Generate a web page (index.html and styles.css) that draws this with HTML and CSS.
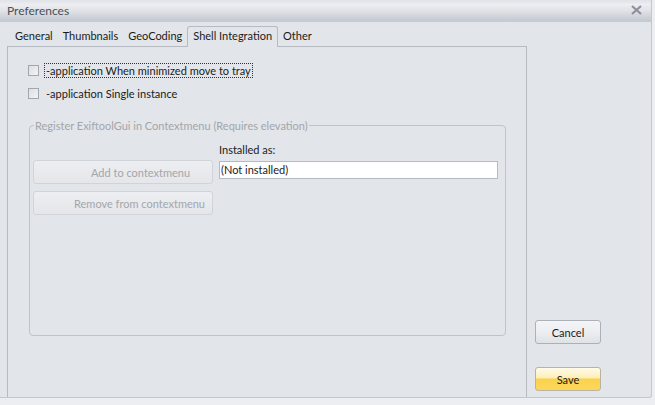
FILE: index.html
```html
<!DOCTYPE html>
<html>
<head>
<meta charset="utf-8">
<link rel="stylesheet" href="styles.css">
</head>
<body>
<div class="window">
  <div class="titlebar">
    <span class="title">Preferences</span>
    <svg class="close" width="11" height="10" viewBox="0 0 11 10"><path d="M1 1 L10 9 M10 1 L1 9" stroke="#8b909a" stroke-width="2.2" fill="none"/></svg>
  </div>
  <div class="main">
    <div class="left">
      <div class="tabs">
        <span class="tab">General</span>
        <span class="tab">Thumbnails</span>
        <span class="tab">GeoCoding</span>
        <span class="tab active">Shell Integration</span>
        <span class="tab">Other</span>
      </div>
      <div class="panel">
        <label class="check first"><span class="box"></span><span class="lbl focus">-application When minimized move to tray</span></label>
        <label class="check"><span class="box"></span><span class="lbl">-application Single instance</span></label>
        <fieldset class="group">
          <legend>Register ExiftoolGui in Contextmenu (Requires elevation)</legend>
          <div class="group-row">
            <div class="btncol">
              <button class="dbtn add">Add to contextmenu</button>
              <button class="dbtn rem">Remove from contextmenu</button>
            </div>
            <div class="inst">
              <div class="inst-lbl">Installed as:</div>
              <div class="input">(Not installed)</div>
            </div>
          </div>
        </fieldset>
      </div>
    </div>
    <div class="right">
      <button class="btn cancel">Cancel</button>
      <button class="btn save">Save</button>
    </div>
  </div>
</div>
</body>
</html>
```
FILE: styles.css
```css
html, body {
  margin: 0;
  padding: 0;
  background: #eceef1;
}
body {
  font-family: Lato, "Open Sans", sans-serif;
  font-size: 11px;
  color: #1b1b1b;
}
.window {
  width: 652px;
  height: 398px;
  background: #e2e5e9;
  border-right: 1px solid #c3c7ce;
  border-bottom: 1px solid #c3c7ce;
  border-bottom-right-radius: 3px;
  box-sizing: border-box;
  display: flex;
  flex-direction: column;
}
.titlebar {
  height: 22px;
  flex: none;
  display: flex;
  align-items: center;
  justify-content: space-between;
  padding: 0 9px 0 7px;
  background: linear-gradient(#dfe2e6 0%, #eceef1 20%, #dfe2e7 50%, #c9ced5 85%, #c5cad2 100%);
}
.title {
  color: #4a4f58;
  font-size: 12px;
  margin-top: -1px;
}
.close { margin-top: -3px; }
.main {
  flex: 1;
  display: flex;
  padding: 5px 0 0 7px;
  min-height: 0;
}
.left {
  width: 520px;
  display: flex;
  flex-direction: column;
}
.tabs {
  display: flex;
  height: 19px;
  padding-left: 3px;
  align-items: flex-end;
  position: relative;
  z-index: 1;
}
.tab {
  padding: 0 5px 3px;
  line-height: 15px;
  white-space: nowrap;
}
.tab.active {
  background: #e2e5e9;
  border: 1px solid #b5bac3;
  border-bottom: none;
  border-radius: 3px 3px 0 0;
  padding: 1px 5px 4px;
  margin-bottom: -1px;
}
.panel {
  flex: 1;
  border: 1px solid #b5bac3;
  border-bottom: none;
  padding: 15px 20px 0 20px;
  display: flex;
  flex-direction: column;
}
.check {
  display: flex;
  align-items: center;
  height: 16px;
  white-space: nowrap;
}
.check + .check { margin-top: 7px; }
.box {
  width: 9px;
  height: 9px;
  border: 1px solid #a2a6ad;
  background: linear-gradient(135deg, #dcdee1, #f3f4f5);
  margin-right: 5px;
}
.lbl { padding: 0 1px; border: 1px solid transparent; line-height: 13px; }
.lbl.focus { border: 1px dotted #333; }
.group {
  margin: 18px 1px 0 1px;
  width: 477px;
  height: 217px;
  box-sizing: border-box;
  border: 1px solid #bfc3ca;
  border-radius: 4px;
  padding: 0 7px 0 3px;
}
.group legend {
  color: #a3a6ab;
  padding: 0 1px;
  margin-left: 1px;
  white-space: nowrap;
}
.group-row {
  display: flex;
  gap: 6px;
}
.btncol {
  display: flex;
  flex-direction: column;
  gap: 7px;
  padding-top: 28px;
}
.dbtn {
  width: 180px;
  height: 24px;
  font: inherit;
  color: #a4a6aa;
  border: 1px solid #d0d4d9;
  border-radius: 3px;
  background: linear-gradient(#eceef1, #e4e6ea);
  padding: 0 0 0 57px;
  text-align: left;
  white-space: nowrap;
}
.dbtn.rem { padding-left: 40px; }
.inst { flex: 1; }
.inst-lbl { line-height: 16px; margin-top: 10px; }
.input {
  margin-top: 3px;
  height: 18px;
  box-sizing: border-box;
  background: #fff;
  border: 1px solid #b6bbc3;
  line-height: 16px;
  padding-left: 1px;
}
.right {
  display: flex;
  flex-direction: column;
  padding: 293px 0 0 8px;
  gap: 23px;
}
.btn {
  width: 66px;
  height: 24px;
  font: inherit;
  color: #1b1b1b;
  border-radius: 3px;
  padding: 0;
}
.cancel {
  border: 1px solid #acb1b9;
  background: linear-gradient(#f4f5f7 0%, #eceef1 50%, #dfe2e6 100%);
}
.save {
  border: 1px solid #b9b3a0;
  background: linear-gradient(#fffbe9 0%, #fdeeb8 45%, #fbd24b 50%, #fcd75e 100%);
}
```
